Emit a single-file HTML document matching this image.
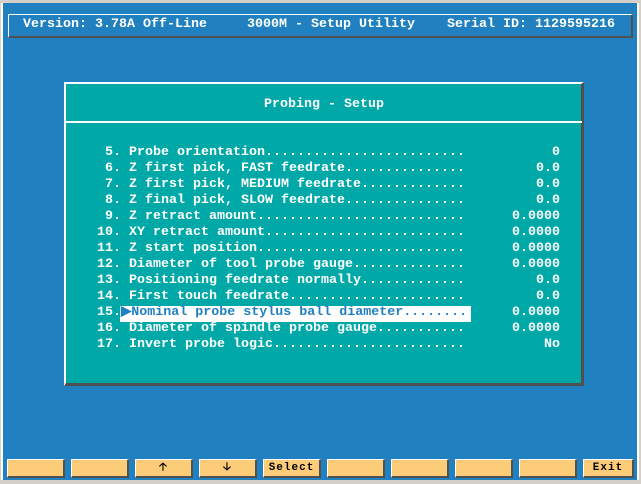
<!DOCTYPE html>
<html><head><style>
*{margin:0;padding:0;box-sizing:border-box}
body{width:641px;height:484px;background:#d4d0c8;position:relative;overflow:hidden;font-family:"Liberation Mono",monospace;font-size:13.33px;color:#fff}
#scr{position:absolute;left:1px;top:3px;width:638px;height:477px;background:#2080c0;border-left:2px solid #fff;border-right:2px solid #fff}
.hdr{position:absolute;left:8px;top:14px;width:625px;height:24px;border-top:1px solid #fff;border-left:1px solid #fff;border-bottom:2px solid #505050;border-right:2px solid #505050}
.t{position:absolute;white-space:pre;line-height:16px;font-weight:bold}
.panel{position:absolute;left:64px;top:82px;width:520px;height:304px;background:#00a8a8;border-top:2px solid #fff;border-left:2px solid #fff;border-right:3px solid #505050;border-bottom:3px solid #505050}
.sep{position:absolute;left:66px;top:121px;width:516px;height:2px;background:#fff}
.hl{position:absolute;left:120px;top:306px;width:351px;height:16px;background:#fff}
.v{position:absolute;right:81px;white-space:pre;line-height:16px;font-weight:bold;text-align:right}
.b{position:absolute;top:459px;height:19px;width:58px;background:#fccc78;border-top:1px solid #fff;border-left:1px solid #fff;border-bottom:2px solid #505050;border-right:2px solid #505050;color:#000;font-size:11px;font-weight:bold;text-align:center;line-height:16px;letter-spacing:1px}
</style></head><body>
<div id="scr"></div>
<div class="hdr"></div>
<div class="t" style="left:23px;top:17px">Version: 3.78A Off-Line</div>
<div class="t" style="left:247px;top:17px">3000M - Setup Utility</div>
<div class="t" style="left:447px;top:17px">Serial ID: 1129595216</div>
<div class="panel"></div>
<div class="sep"></div>
<div class="t" style="left:0;width:648px;text-align:center;top:97px">Probing - Setup</div>
<div class="hl"></div>
<div class="t" style="left:97px;top:145px"> 5. Probe orientation.........................
 6. Z first pick, FAST feedrate...............
 7. Z first pick, MEDIUM feedrate.............
 8. Z final pick, SLOW feedrate...............
 9. Z retract amount..........................
10. XY retract amount.........................
11. Z start position..........................
12. Diameter of tool probe gauge..............
13. Positioning feedrate normally.............
14. First touch feedrate......................
15.<span style="color:#2080c0">&#9654;Nominal probe stylus ball diameter........</span>
16. Diameter of spindle probe gauge...........
17. Invert probe logic........................</div>
<div class="v" style="top:145px">0
0.0
0.0
0.0
0.0000
0.0000
0.0000
0.0000
0.0
0.0
0.0000
0.0000
No</div>
<div class="b" style="left:7px"></div>
<div class="b" style="left:71px"></div>
<div class="b" style="left:135px">&#129121;</div>
<div class="b" style="left:199px">&#129123;</div>
<div class="b" style="left:263px">Select</div>
<div class="b" style="left:327px"></div>
<div class="b" style="left:391px"></div>
<div class="b" style="left:455px"></div>
<div class="b" style="left:519px"></div>
<div class="b" style="left:583px;width:51px">Exit</div>
</body></html>
